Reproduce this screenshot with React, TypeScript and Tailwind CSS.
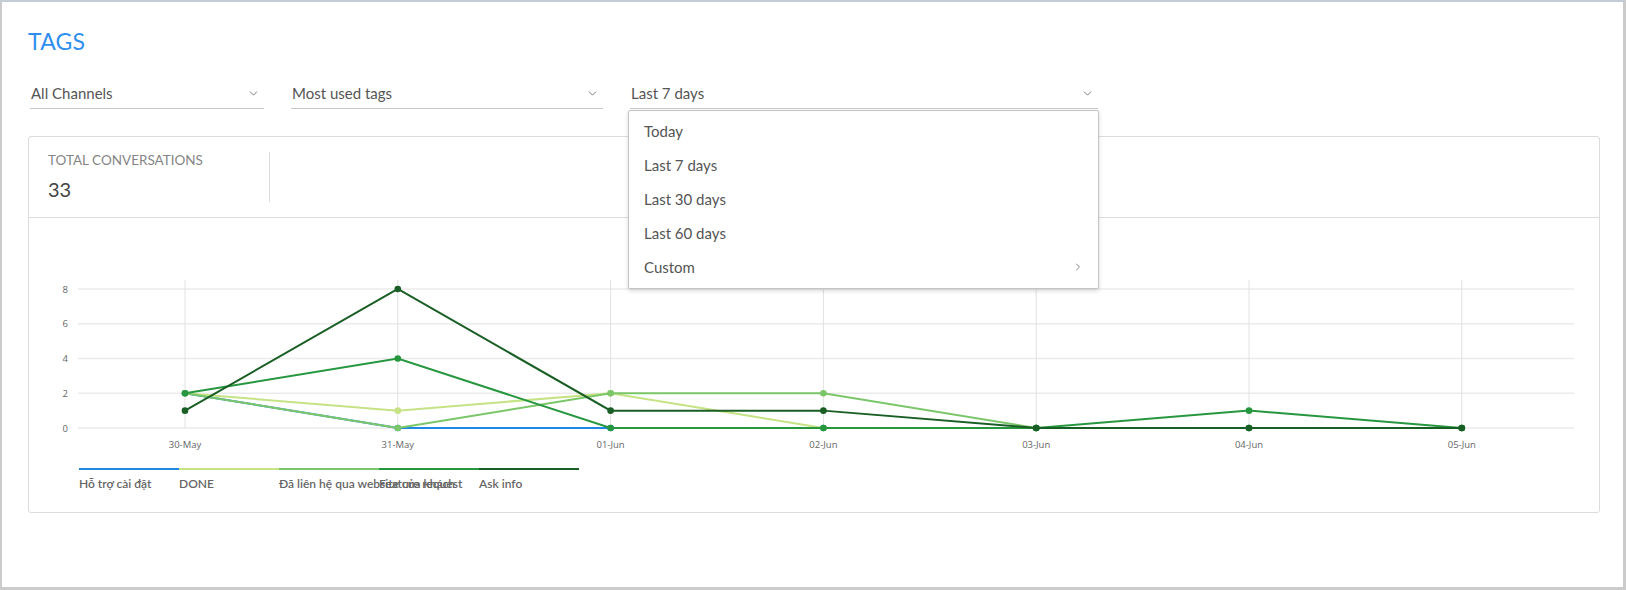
import { ChevronDown, ChevronRight } from "lucide-react";

const days = ["30-May", "31-May", "01-Jun", "02-Jun", "03-Jun", "04-Jun", "05-Jun"];

const series = [
  { name: "Hỗ trợ cài đặt", color: "#1e88e5", data: [2, 0, 0, 0, 0, 0, 0] },
  { name: "DONE", color: "#c5e384", data: [2, 1, 2, 0, 0, 0, 0] },
  { name: "Đã liên hệ qua website của khách", color: "#7cc66a", data: [2, 0, 2, 2, 0, 0, 0] },
  { name: "Feature request", color: "#27973f", data: [2, 4, 0, 0, 0, 1, 0] },
  { name: "Ask info", color: "#195e24", data: [1, 8, 1, 1, 0, 0, 0] },
];

const X0 = 156;
const DX = 212.8;
const Y0 = 210;
const DY = 17.375;
const px = (i: number) => X0 + i * DX;
const py = (v: number) => Y0 - v * DY;

function Select({ label, width, gap }: { label: string; width: string; gap: string }) {
  return (
    <div className={`${width} ${gap} flex h-[30px] items-center justify-between border-b border-[#c8c8c8] pr-[4px] text-[15px] text-[#555]`}>
      <span className="pl-[1px]">{label}</span>
      <ChevronDown className="h-[13px] w-[13px] text-[#666]" strokeWidth={1.6} />
    </div>
  );
}

function Chart() {
  return (
    <svg width="1570" height="250" className="block" style={{ fontFamily: "'Open Sans', sans-serif" }}>
      {[0, 2, 4, 6, 8].map((v) => (
        <g key={v}>
          <line x1={49} x2={1545} y1={py(v)} y2={py(v)} stroke="#ebebeb" strokeWidth={1.5} />
          <text x={39} y={py(v) + 3.5} fontSize={9.5} fill="#666" textAnchor="end">{v}</text>
        </g>
      ))}
      {days.map((d, i) => (
        <g key={d}>
          <line x1={px(i)} x2={px(i)} y1={62} y2={Y0} stroke="#e2e2e2" strokeWidth={1} />
          <text x={px(i)} y={230} fontSize={9.5} fill="#666" textAnchor="middle">{d}</text>
        </g>
      ))}
      {series.map((s) => (
        <g key={s.name}>
          <polyline
            points={s.data.map((v, i) => `${px(i)},${py(v)}`).join(" ")}
            fill="none"
            stroke={s.color}
            strokeWidth={2}
          />
          {s.data.map((v, i) => (
            <circle key={i} cx={px(i)} cy={py(v)} r={3.3} fill={s.color} />
          ))}
        </g>
      ))}
    </svg>
  );
}

export default function App() {
  return (
    <div
      className="relative h-[590px] w-[1626px] overflow-hidden border-t-2 border-l-2 border-r-[3px] border-b-[3px] border-t-[#c3ccd6] border-l-[#cbcbcb] border-r-[#cbcbcb] border-b-[#cbcbcb] bg-white"
      style={{ fontFamily: "Lato, 'Noto Sans', sans-serif" }}
    >
      <div className="px-[26px] pt-[25px]">
        <h1 className="text-[23px] leading-[28px] tracking-[0.2px] text-[#2f8ff0]">TAGS</h1>

        <div className="ml-[2px] mt-[24px] flex">
          <Select label="All Channels" width="w-[234px]" gap="mr-[27px]" />
          <Select label="Most used tags" width="w-[312px]" gap="mr-[27px]" />
          <Select label="Last 7 days" width="w-[468px]" gap="" />
        </div>

        <div className="mt-[27px] w-[1572px] rounded-[3px] border border-[#dcdcdc]">
          <div className="flex h-[81px] border-b border-[#dcdcdc]">
            <div className="mt-[15px] h-[50px] w-[241px] border-r border-[#dcdcdc] pl-[19px]">
              <div className="text-[13.5px] leading-[17px] text-[#858585]">TOTAL CONVERSATIONS</div>
              <div className="mt-[8px] text-[20px] leading-[24px] text-[#444]">33</div>
            </div>
          </div>

          <Chart />

          <div className="ml-[50px] flex pb-[20px]">
            {series.map((s) => (
              <div key={s.name} className="w-[100px]">
                <div className="h-[2px]" style={{ backgroundColor: s.color }} />
                <div className="mt-[6px] whitespace-nowrap text-[12px] font-semibold leading-[16px] text-[#666]">
                  {s.name}
                </div>
              </div>
            ))}
          </div>
        </div>
      </div>

      <div className="absolute left-[626px] top-[108px] w-[471px] rounded-[2px] border border-[#c4c4c4] bg-white pb-[4px] pt-[3px] shadow-[0_2px_4px_rgba(0,0,0,0.15)]">
        {["Today", "Last 7 days", "Last 30 days", "Last 60 days"].map((t) => (
          <div key={t} className="flex h-[34px] items-center pl-[15px] text-[15px] text-[#555]">
            {t}
          </div>
        ))}
        <div className="flex h-[34px] items-center justify-between pl-[15px] pr-[14px] text-[15px] text-[#555]">
          <span>Custom</span>
          <ChevronRight className="h-[12px] w-[12px] text-[#666]" strokeWidth={1.6} />
        </div>
      </div>
    </div>
  );
}
